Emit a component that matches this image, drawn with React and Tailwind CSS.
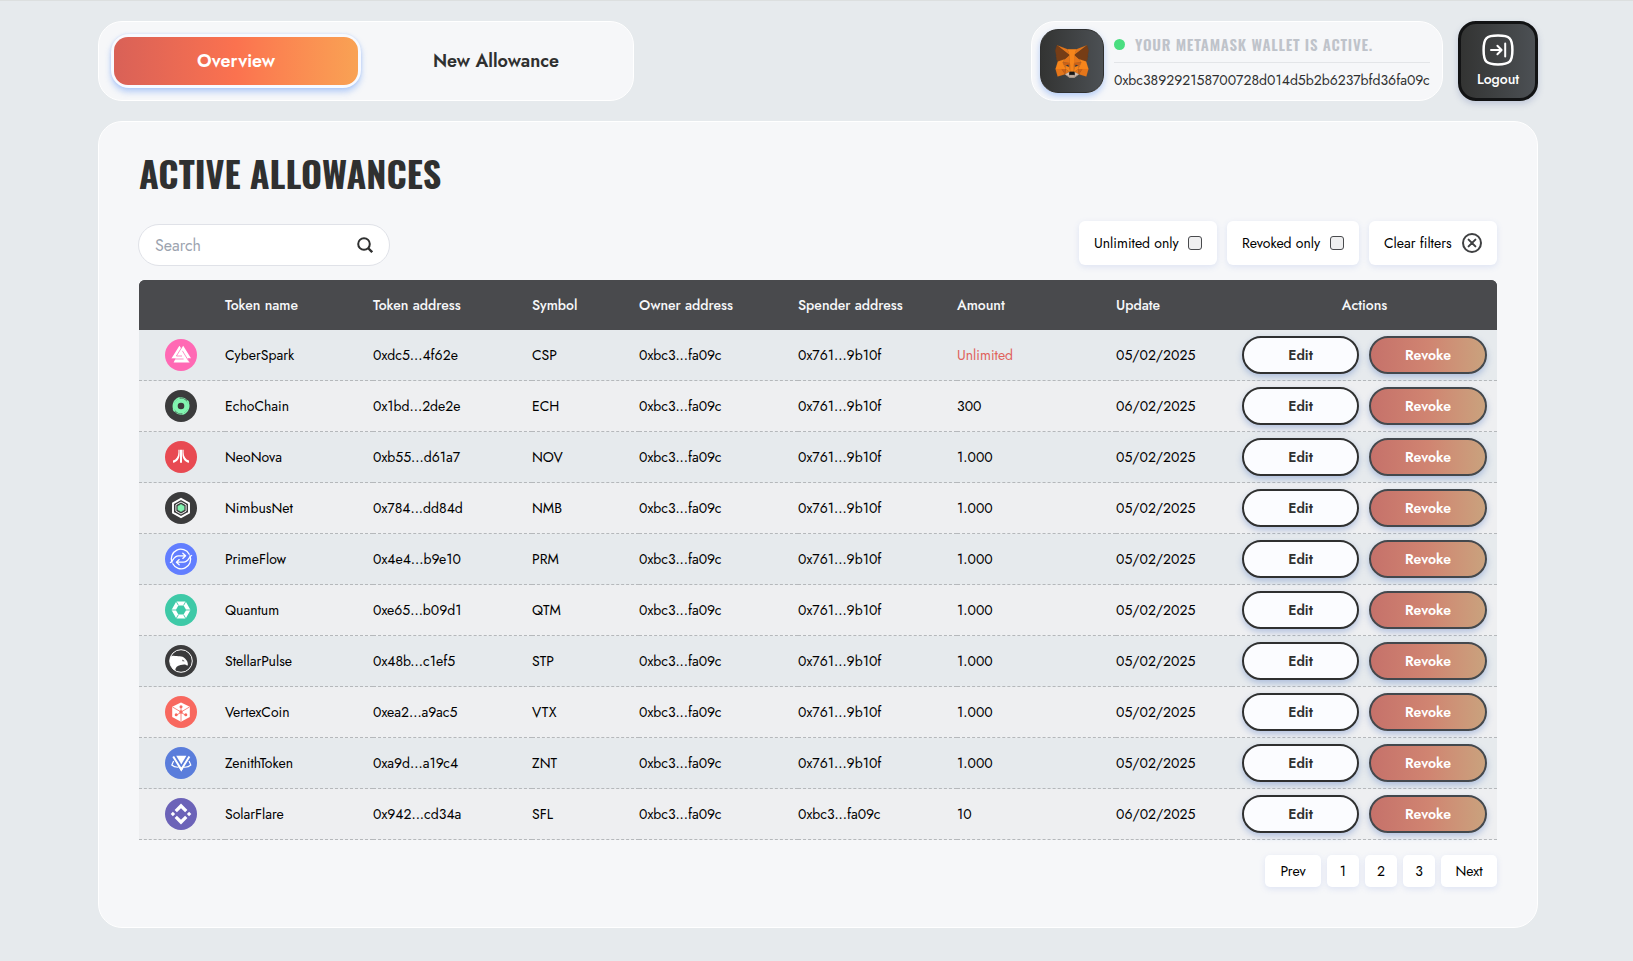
import React from 'react';

const WHITE = '#fff';
const WALLET_ADDRESS = '0xbc389292158700728d014d5b2b6237bfd36fa09c';

const tokenIcons = {
  CSP: {
    bg: '#ff69b4',
    art: (
      <>
        <path d="M14.4 6.8 L16.3 9.4 L18.2 6.8 L26 19.2 H22.6 L24.6 23.4 H8.6 L10.6 19.4 H6.4 Z" fill={WHITE} />
        <path d="M6.4 20 H18.6 M16.6 8.6 L11.4 17 H17 M17.4 11.8 L24 22.6" fill="none" stroke="#ff69b4" strokeWidth="0.75" />
      </>
    ),
  },
  ECH: {
    bg: '#3b3b3c',
    art: (
      <g fill="none" stroke="#82f5b0">
        <circle cx="16" cy="16" r="5.4" strokeWidth="4.2" />
        <path d="M9.6 21.4 C6.8 16 8.2 9.8 14.6 8 M22.4 10.6 C25.2 16 23.8 22.2 17.4 24" strokeWidth="1.4" />
        <path d="M11.6 8.6 C16.5 6.6 21.5 8.3 23.9 12.8 M20.4 23.4 C15.5 25.4 10.5 23.7 8.1 19.2" strokeWidth="0.9" />
      </g>
    ),
  },
  NOV: {
    bg: '#e84a52',
    art: (
      <g fill={WHITE}>
        <path d="M15 8.8 H17 V21.8 H15 Z" />
        <path d="M13.4 8.8 H14.6 V13 C14.6 17.8 12 21 8 21.8 V19.6 C11.4 18.2 13.4 15.4 13.4 11.4 Z" />
        <path d="M18.6 8.8 H17.4 V13 C17.4 17.8 20 21 24 21.8 V19.6 C20.6 18.2 18.6 15.4 18.6 11.4 Z" />
      </g>
    ),
  },
  NMB: {
    bg: '#3b3b3c',
    art: (
      <g fill="none" stroke={WHITE}>
        <path d="M16 6.9 L24 11.4 V20.6 L16 25.1 L8 20.6 V11.4 Z" strokeWidth="1.9" />
        <path d="M16 10 L21.1 12.9 V19.1 L16 22 L10.9 19.1 V12.9 Z" strokeWidth="0.9" />
        <path d="M16 12.4 L19.1 14.2 V17.8 L16 19.6 L12.9 17.8 V14.2 Z" fill="#82f5b0" stroke="#82f5b0" strokeWidth="0.6" />
      </g>
    ),
  },
  PRM: {
    bg: '#627eff',
    art: (
      <g fill="none" stroke={WHITE} strokeWidth="1.3" strokeLinecap="round" strokeLinejoin="round">
        <path d="M7 19.2 A9.5 9.5 0 0 1 24.2 11.2 M25 12.8 A9.5 9.5 0 0 1 7.8 20.8" />
        <path d="M5.4 19.5 C8 18.5 8.5 12.8 13.5 12.8 H20.4 M17.8 10.2 L20.6 12.8 L17.8 15.4" />
        <path d="M26.6 12.5 C24 13.5 23.5 19.2 18.5 19.2 H11.6 M14.2 16.6 L11.4 19.2 L14.2 21.8" />
      </g>
    ),
  },
  QTM: {
    bg: '#3ec9a7',
    art: (
      <>
        <path d="M11.3 7.6 H20.7 L25.5 16 L20.7 24.4 H11.3 L6.5 16 Z" fill={WHITE} />
        <path d="M13.4 11.6 H18.6 L21.2 16 L18.6 20.4 H13.4 L10.8 16 Z" fill="#3ec9a7" />
        <path d="M10.8 6.8 L13.4 11.3 M21.2 6.8 L18.6 11.3 M26 16 H21 M21.2 25.2 L18.6 20.7 M10.8 25.2 L13.4 20.7 M6 16 H11" stroke="#3ec9a7" strokeWidth="0.9" />
      </>
    ),
  },
  STP: {
    bg: '#3b3b3c',
    art: (
      <>
        <circle cx="16" cy="16" r="11.3" fill="none" stroke={WHITE} strokeWidth="1" />
        <path d="M4.8 15.2 C4.9 12 6 10.6 8.5 10.8 C13 11.6 17 10.4 20 13.4 C22 15.2 22.9 17.2 22.9 19.4 C22.6 20.6 22.2 21 21.8 20.6 C20.6 18.9 17.8 19.6 15.6 20 C12.2 20.6 10.6 22.4 10.2 25.4 C6.4 23 4.8 19 4.8 15.2 Z" fill={WHITE} />
        <path d="M17.2 14.6 L19.8 16.2 L17.6 16.2 Z" fill="#3b3b3c" />
      </>
    ),
  },
  VTX: {
    bg: '#f8685f',
    art: (
      <>
        <path d="M16 6.4 L24.8 10.8 V21 L16 25.8 L7.2 21 V10.8 Z" fill={WHITE} />
        <g stroke="#f8685f" strokeWidth="0.8">
          <path d="M16 16 V25.5 M16 16 L7.5 11 M16 16 L24.5 11" />
          <path d="M16 10.8 V15 M11.6 19 L15 17 M20.4 19 L17 17" />
        </g>
        <g fill="#f8685f">
          <circle cx="16" cy="10.8" r="1.5" />
          <circle cx="16" cy="16" r="1.7" />
          <circle cx="11.2" cy="18.8" r="1.5" />
          <circle cx="20.8" cy="18.8" r="1.5" />
        </g>
      </>
    ),
  },
  ZNT: {
    bg: '#5a7ddb',
    art: (
      <>
        <path d="M11.2 8.8 H21.4 L16.3 17.4 Z" fill={WHITE} />
        <g fill="none" stroke={WHITE} strokeWidth="2">
          <path d="M8.2 9.4 L16.3 22.6 L24.4 9.4" />
          <path d="M8.6 14 L6.8 18 C8.6 19.8 11 20.4 13.6 20.2 M24 14 L25.8 18 C24 19.8 21.6 20.4 19 20.2" strokeWidth="1.2" />
        </g>
        <path d="M13.2 19 L16.3 24.6 L19.4 19 L16.3 20.6 Z" fill={WHITE} />
      </>
    ),
  },
  SFL: {
    bg: '#6c63b8',
    art: (
      <g fill={WHITE}>
        <path d="M16 5.6 L22.4 12 L20.1 14.3 L16 10.2 L11.9 14.3 L9.6 12 Z" />
        <path d="M16 26.4 L22.4 20 L20.1 17.7 L16 21.8 L11.9 17.7 L9.6 20 Z" />
        <path d="M5.7 16 L7.9 13.8 L10.1 16 L7.9 18.2 Z" />
        <path d="M21.9 16 L24.1 13.8 L26.3 16 L24.1 18.2 Z" />
      </g>
    ),
  },
};

const OWNER = '0xbc3...fa09c';
const SPENDER = '0x761...9b10f';

const allowances = [
  { name: 'CyberSpark', address: '0xdc5...4f62e', symbol: 'CSP', spender: SPENDER, amount: 'Unlimited', update: '05/02/2025' },
  { name: 'EchoChain', address: '0x1bd...2de2e', symbol: 'ECH', spender: SPENDER, amount: '300', update: '06/02/2025' },
  { name: 'NeoNova', address: '0xb55...d61a7', symbol: 'NOV', spender: SPENDER, amount: '1.000', update: '05/02/2025' },
  { name: 'NimbusNet', address: '0x784...dd84d', symbol: 'NMB', spender: SPENDER, amount: '1.000', update: '05/02/2025' },
  { name: 'PrimeFlow', address: '0x4e4...b9e10', symbol: 'PRM', spender: SPENDER, amount: '1.000', update: '05/02/2025' },
  { name: 'Quantum', address: '0xe65...b09d1', symbol: 'QTM', spender: SPENDER, amount: '1.000', update: '05/02/2025' },
  { name: 'StellarPulse', address: '0x48b...c1ef5', symbol: 'STP', spender: SPENDER, amount: '1.000', update: '05/02/2025' },
  { name: 'VertexCoin', address: '0xea2...a9ac5', symbol: 'VTX', spender: SPENDER, amount: '1.000', update: '05/02/2025' },
  { name: 'ZenithToken', address: '0xa9d...a19c4', symbol: 'ZNT', spender: SPENDER, amount: '1.000', update: '05/02/2025' },
  { name: 'SolarFlare', address: '0x942...cd34a', symbol: 'SFL', spender: OWNER, amount: '10', update: '06/02/2025' },
];

const foxFacets = [
  ['#e2761b', '274.1,35.5 174.6,109.4 193,65.8'],
  ['#e4761b', '44.4,35.5 143.1,110.1 125.6,65.8'],
  ['#e4761b', '238.3,206.8 211.8,247.4 268.5,263 284.8,207.7'],
  ['#e4761b', '33.9,207.7 50.1,263 106.8,247.4 80.3,206.8'],
  ['#e4761b', '103.6,138.2 87.8,162.1 144.1,164.6 142.1,104.1'],
  ['#e4761b', '214.9,138.2 175.9,103.4 174.6,164.6 230.8,162.1'],
  ['#e4761b', '106.8,247.4 140.6,230.9 111.4,208.1'],
  ['#e4761b', '177.9,230.9 211.8,247.4 207.1,208.1'],
  ['#d7c1b3', '211.8,247.4 177.9,230.9 180.6,253 180.3,262.3'],
  ['#d7c1b3', '106.8,247.4 138.3,262.3 138.1,253 140.6,230.9'],
  ['#233447', '138.8,193.5 110.6,185.2 130.5,176.1'],
  ['#233447', '179.7,193.5 188,176.1 208,185.2'],
  ['#cd6116', '106.8,247.4 111.6,206.8 80.3,207.7'],
  ['#cd6116', '207,206.8 211.8,247.4 238.3,207.7'],
  ['#cd6116', '230.8,162.1 174.6,164.6 179.8,193.5 188.1,176.1 208.1,185.2'],
  ['#cd6116', '110.6,185.2 130.6,176.1 138.8,193.5 144.1,164.6 87.8,162.1'],
  ['#e4751f', '87.8,162.1 111.4,208.1 110.6,185.2'],
  ['#e4751f', '208.1,185.2 207.1,208.1 230.8,162.1'],
  ['#e4751f', '144.1,164.6 138.8,193.5 145.4,227.6 146.9,182.7'],
  ['#e4751f', '174.6,164.6 171.9,182.6 173.1,227.6 179.8,193.5'],
  ['#f6851b', '179.8,193.5 173.1,227.6 177.9,230.9 207.1,208.1 208.1,185.2'],
  ['#f6851b', '110.6,185.2 111.4,208.1 140.6,230.9 145.4,227.6 138.8,193.5'],
  ['#c0ad9e', '180.3,262.3 180.6,253 178.1,250.8 140.4,250.8 138.1,253 138.3,262.3 106.8,247.4 117.8,256.4 140.1,271.9 178.4,271.9 200.8,256.4 211.8,247.4'],
  ['#161616', '177.9,230.9 173.1,227.6 145.4,227.6 140.6,230.9 138.1,253 140.4,250.8 178.1,250.8 180.6,253'],
  ['#763d16', '278.3,114.2 286.8,73.4 274.1,35.5 177.9,106.9 214.9,138.2 267.2,153.5 278.8,140 273.8,136.4 281.8,129.1 275.6,124.3 283.6,118.2'],
  ['#763d16', '31.8,73.4 40.3,114.2 34.9,118.2 42.9,124.3 36.8,129.1 44.8,136.4 39.8,140 51.3,153.5 103.6,138.2 140.6,106.9 44.4,35.5'],
  ['#f6851b', '267.2,153.5 214.9,138.2 230.8,162.1 207.1,208.1 238.3,207.7 284.8,207.7'],
  ['#f6851b', '103.6,138.2 51.3,153.5 33.9,207.7 80.3,207.7 111.4,208.1 87.8,162.1'],
  ['#f6851b', '174.6,164.6 177.9,106.9 193.1,65.8 125.6,65.8 140.6,106.9 144.1,164.6 145.3,182.8 145.4,227.6 173.1,227.6 173.3,182.8'],
];

function FoxLogo() {
  return (
    <svg viewBox="30 34 259 240" preserveAspectRatio="none" className="h-[33px] w-[34px]">
      {foxFacets.map(([color, points], i) => (
        <polygon key={i} fill={color} stroke={color} points={points} />
      ))}
    </svg>
  );
}

function LogoutIcon() {
  return (
    <svg viewBox="0 0 32 32" className="size-8" fill="none" stroke="currentColor" strokeLinecap="round" strokeLinejoin="round">
      <path strokeWidth="2.5" d="M16 1.6 C27.8 1.6 30.4 4.2 30.4 16 C30.4 27.8 27.8 30.4 16 30.4 C4.2 30.4 1.6 27.8 1.6 16 C1.6 4.2 4.2 1.6 16 1.6 Z" />
      <path strokeWidth="2" d="M9 16 H19.4 M15.4 11.8 L19.6 16 L15.4 20.2 M23.2 9.6 V22.4" />
    </svg>
  );
}

function TokenIcon({ symbol }) {
  const { bg, art } = tokenIcons[symbol];
  return (
    <svg viewBox="0 0 32 32" className="ml-[26px] block size-8">
      <circle cx="16" cy="16" r="16" fill={bg} />
      {art}
    </svg>
  );
}

function Header() {
  return (
    <header className="flex h-20 justify-between">
      <nav className="flex w-[536px] items-center rounded-[24px] border border-white bg-[#f6f7f9] px-3 text-lg font-semibold text-[#2f3030]">
        <button className="h-[54px] w-[250px] rounded-[18px] bg-[#f8faff] p-[3px] text-white shadow-[0_4px_6px_rgba(80,140,245,0.38),0_0_3px_rgba(80,140,245,0.2)]">
          <span className="flex h-full items-center justify-center rounded-[14px] bg-linear-to-r from-[#d96157] via-[#fb724f] to-[#f9a254]">Overview</span>
        </button>
        <button className="ml-[10px] h-[54px] w-[250px]">New Allowance</button>
      </nav>
      <div className="flex gap-[15px]">
        <section className="flex w-[412px] items-center rounded-[24px] border border-white bg-[#f6f7f9] pl-2">
          <div className="flex size-16 items-center justify-center rounded-[18px] border border-[#2f3030] bg-linear-to-r from-[#333433] to-[#4c5054] shadow-[0_3px_6px_rgba(80,140,245,0.4)]">
            <FoxLogo />
          </div>
          <div className="ml-[10px] w-[316px]">
            <div className="flex h-[38px] items-center border-b border-[#e3e5e8] pt-[2px]">
              <span className="mr-[10px] size-[11px] rounded-full bg-[#4ade80]" />
              <span className="font-[Oswald,'Open_Sans_Condensed',sans-serif] text-[15px] font-semibold tracking-wider whitespace-nowrap text-[#bfc3ca]">YOUR METAMASK WALLET IS ACTIVE.</span>
            </div>
            <p className="flex h-[34px] items-center text-sm text-[#2f3030]">{WALLET_ADDRESS}</p>
          </div>
        </section>
        <button className="flex size-20 flex-col items-center rounded-[18px] border-3 border-[#121314] bg-linear-to-r from-[#333433] to-[#4c5054] pt-[10px] text-sm font-medium text-white shadow-[0_3px_6px_rgba(80,100,160,0.25)]">
          <LogoutIcon />
          <span className="mt-[3px]">Logout</span>
        </button>
      </div>
    </header>
  );
}

function Toolbar() {
  const chip = 'flex h-11 items-center rounded-md bg-white text-sm shadow-[0_2px_6px_rgba(100,130,220,0.16)]';
  return (
    <div className="mt-[23px] flex h-[45px] items-start justify-between">
      <div className="mt-[3px] -ml-px flex h-[42px] w-[252px] items-center justify-between rounded-full border border-[#e0e2e8] bg-white px-4 text-[#9ca3af]">
        <span className="pt-[2px] text-base">Search</span>
        <svg viewBox="0 0 16 16" className="size-4" fill="none" stroke="#2f3030" strokeWidth="2">
          <circle cx="7" cy="7" r="5.8" />
          <path d="M11 11 L15.2 15.2" strokeWidth="2.4" />
        </svg>
      </div>
      <div className="flex gap-[10px] text-black">
        <label className={`${chip} w-[138px] justify-between px-[15px]`}>
          Unlimited only
          <span className="size-[14px] rounded-[3px] border border-[#494a4d] bg-[#efeff0]" />
        </label>
        <label className={`${chip} w-[132px] justify-between px-[15px]`}>
          Revoked only
          <span className="size-[14px] rounded-[3px] border border-[#494a4d] bg-[#efeff0]" />
        </label>
        <button className={`${chip} w-[128px] justify-between px-[15px]`}>
          Clear filters
          <svg viewBox="0 0 20 20" className="size-5" fill="none" stroke="#3f4042" strokeWidth="2" strokeLinecap="round">
            <circle cx="10" cy="10" r="9" />
            <path d="M6.6 6.6 L13.4 13.4 M13.4 6.6 L6.6 13.4" />
          </svg>
        </button>
      </div>
    </div>
  );
}

function AllowanceTable() {
  return (
    <table className="mt-[14px] w-[1358px] table-fixed border-separate border-spacing-0 text-left text-sm">
      <colgroup>
        <col className="w-[86px]" />
        <col className="w-[148px]" />
        <col className="w-[159px]" />
        <col className="w-[107px]" />
        <col className="w-[159px]" />
        <col className="w-[159px]" />
        <col className="w-[159px]" />
        <col className="w-[116px]" />
        <col className="w-[265px]" />
      </colgroup>
      <thead className="bg-[#494a4d] text-[#f6f7f9] [&_th]:bg-[#494a4d] [&_th]:p-0 [&_th]:font-medium">
        <tr className="h-[50px]">
          <th className="rounded-tl-md" />
          <th>Token name</th>
          <th>Token address</th>
          <th>Symbol</th>
          <th>Owner address</th>
          <th>Spender address</th>
          <th>Amount</th>
          <th>Update</th>
          <th className="rounded-tr-md text-center">Actions</th>
        </tr>
      </thead>
      <tbody className="[&_td]:border-b [&_td]:border-dashed [&_td]:border-[#b5b8bb] [&_td]:p-0">
        {allowances.map((row) => (
          <tr key={row.symbol} className="h-[51px] odd:bg-[#e6eaed] even:bg-[#eeeff1]">
            <td><TokenIcon symbol={row.symbol} /></td>
            <td>{row.name}</td>
            <td>{row.address}</td>
            <td>{row.symbol}</td>
            <td>{OWNER}</td>
            <td>{row.spender}</td>
            <td className={row.amount === 'Unlimited' ? 'text-[#e0625c]' : ''}>{row.amount}</td>
            <td>{row.update}</td>
            <td>
              <div className="flex gap-[10px] px-[10px] font-semibold">
                <button className="h-[38px] w-[117px] rounded-full border-2 border-[#2f3030] bg-[#fbfcff] text-[#2f3030] shadow-[0_3px_6px_rgba(70,110,190,0.35)]">Edit</button>
                <button className="h-[38px] w-[118px] rounded-full border-2 border-[#43484d] bg-linear-to-r from-[#c5716a] via-[#d08471] to-[#c9a37e] bg-origin-border text-white shadow-[0_3px_6px_rgba(70,110,190,0.35)]">Revoke</button>
              </div>
            </td>
          </tr>
        ))}
      </tbody>
    </table>
  );
}

function Pagination() {
  const item = 'h-8 rounded-[5px] bg-white shadow-[0_2px_6px_rgba(100,130,220,0.16)]';
  return (
    <div className="mt-[15px] flex justify-end gap-[6px] text-sm text-black">
      <button className={`${item} w-14`}>Prev</button>
      {[1, 2, 3].map((page) => (
        <button key={page} className={`${item} w-8`}>{page}</button>
      ))}
      <button className={`${item} w-14`}>Next</button>
    </div>
  );
}

export default function App() {
  return (
    <div className="flex h-[961px] justify-center overflow-hidden border-t border-[#dcdfdf] bg-[#e6eaed] pt-5 font-[Jost,Lato,sans-serif] text-black">
      <div className="ml-[3px] w-[1440px]">
        <Header />
        <main className="mt-5 h-[807px] rounded-[24px] border border-white bg-[#f6f7f9] px-10 pt-[26px]">
          <h1 className="font-[Oswald,'Open_Sans_Condensed',sans-serif] text-4xl leading-[50px] font-bold text-[#2f3030]">ACTIVE ALLOWANCES</h1>
          <Toolbar />
          <AllowanceTable />
          <Pagination />
        </main>
      </div>
    </div>
  );
}
